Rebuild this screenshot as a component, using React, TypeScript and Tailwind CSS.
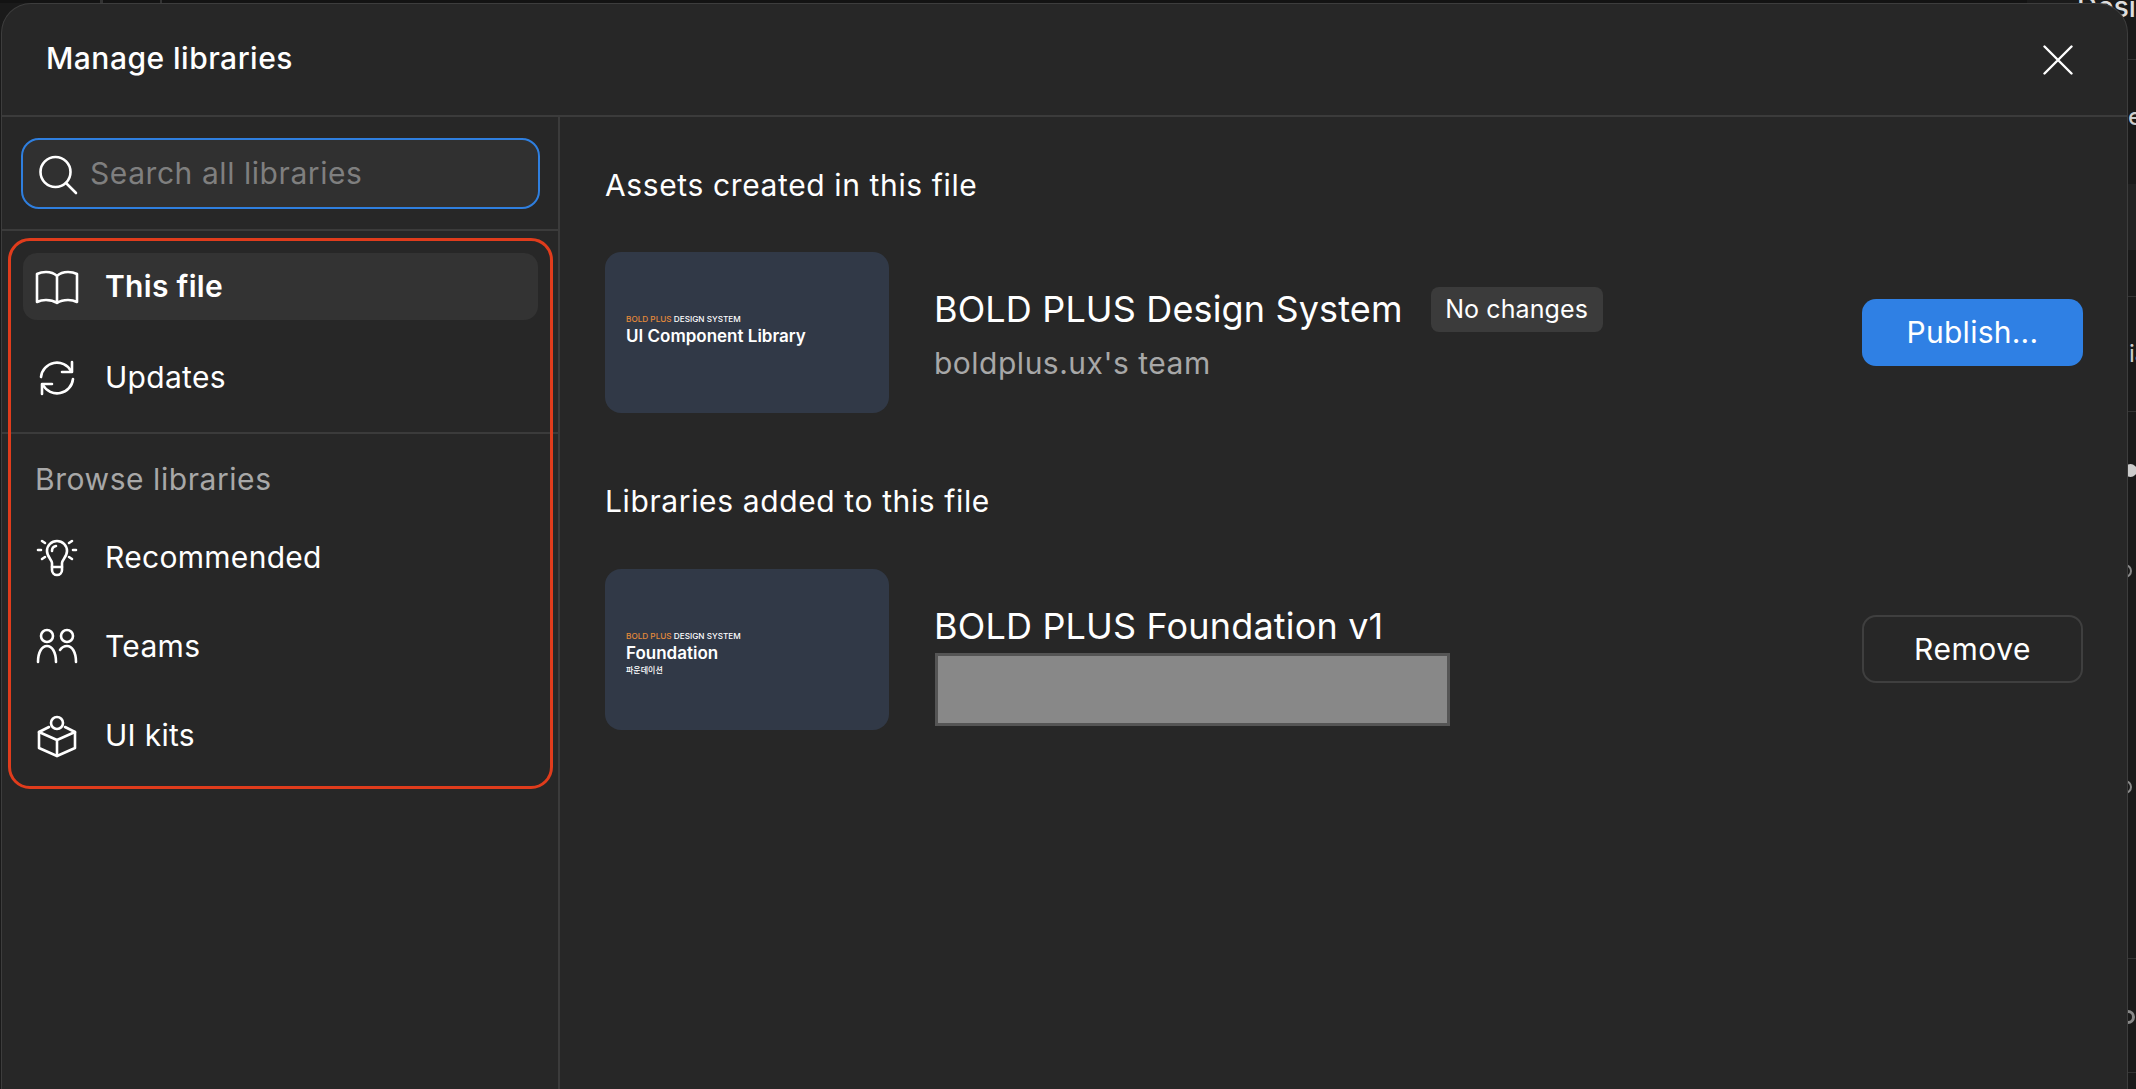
import type { ReactNode } from 'react';

const stroke = {
  fill: 'none',
  stroke: 'currentColor',
  strokeWidth: 2.6,
  strokeLinecap: 'round' as const,
  strokeLinejoin: 'round' as const,
};

function Icon({ children }: { children: ReactNode }) {
  return (
    <svg viewBox="0 0 44 44" className="h-[44px] w-[44px] shrink-0 text-white" {...stroke}>
      {children}
    </svg>
  );
}

const BookIcon = () => (
  <Icon>
    <path d="M22 11C19 8 15 7 11 7C8 7 5 7.500 2 9V37C5 35.500 8 35 11 35C15 35 19 36 22 38C25 36 29 35 33 35C36 35 39 35.500 42 37V9C39 7.500 36 7 33 7C29 7 25 8 22 11V38" />
  </Icon>
);

const RefreshIcon = () => (
  <Icon>
    <path d="M6 21A16 16 0 0 1 36 15" />
    <path d="M37 6V16H27" />
    <path d="M38 23A16 16 0 0 1 8 29" />
    <path d="M7 38V28H17" />
  </Icon>
);

const BulbIcon = () => (
  <Icon>
    <path d="M17 31V27C17 24 12 21 12 15A10 10 0 0 1 32 15C32 21 27 24 27 27V31Z" />
    <path d="M17 31V34A5 5 0 0 0 27 34V31" />
    <path d="M17 15A5 5 0 0 1 21 10" />
    <path d="M7 5L10 7M3 14H6M7 23L10 21M37 5L34 7M41 14H38M37 23L34 21" />
  </Icon>
);

const TeamsIcon = () => (
  <Icon>
    <circle cx="12" cy="11" r="6" />
    <circle cx="32" cy="11" r="6" />
    <path d="M3 37C3 27 7 21 12 21C17 21 21 27 21 37" />
    <path d="M25 25C27 22 29 21 32 21C37 21 41 27 41 37" />
  </Icon>
);

const KitIcon = () => (
  <Icon>
    <circle cx="22" cy="9" r="6" />
    <path d="M14 13L4 18V34L22 42L40 34V18L30 13" />
    <path d="M4 18L22 26L40 18M22 26V42" />
  </Icon>
);

function NavItem({ icon, label, active }: { icon: ReactNode; label: string; active?: boolean }) {
  return (
    <div
      className={`flex h-[67px] w-[515px] items-center gap-[26px] rounded-[14px] pl-[12px] text-[30px] tracking-[0.3px] ${
        active ? 'bg-[#333333] font-semibold' : 'font-normal'
      }`}
    >
      {icon}
      <span>{label}</span>
    </div>
  );
}

function Thumb({ title, sub }: { title: string; sub?: string }) {
  return (
    <div className="h-[161px] w-[284px] shrink-0 rounded-[16px] bg-[#313947] pt-[61px] pl-[21px]">
      <div className="text-[8.200px] leading-[12px] font-medium text-white">
        <span className="text-[#e58a3a]">BOLD PLUS</span> DESIGN SYSTEM
      </div>
      <div className="text-[17px] leading-[23px] font-semibold text-white">{title}</div>
      {sub && <div className="-mt-[1px] text-[8px] leading-[12px] font-medium text-white">{sub}</div>}
    </div>
  );
}

export default function App() {
  return (
    <div className="relative h-[1089px] w-[2136px] overflow-hidden bg-[#1a1a1a] pt-[3px] pr-[8px] pl-[1px] font-['Inter','Noto_Sans_CJK_KR',sans-serif] text-white">
      {/* editor peeking out behind the dialog */}
      <div className="absolute top-0 left-0 h-[3px] w-[2027px] bg-[#131313]" />
      <div className="absolute top-0 left-[100px] h-[3px] w-[3px] bg-[#333333]" />
      <div className="absolute top-0 left-[160px] h-[3px] w-[2px] bg-[#333333]" />
      <div className="absolute top-[59px] left-[2128px] h-[1px] w-[8px] bg-[#333333]" />
      <div className="absolute top-[184px] left-[2128px] h-[66px] w-[8px] bg-[#222222]" />
      <div className="absolute top-[296px] left-[2128px] h-[1px] w-[8px] bg-[#333333]" />
      <div className="absolute top-[411px] left-[2128px] h-[1px] w-[8px] bg-[#333333]" />
      <div className="absolute top-[958px] left-[2128px] h-[1px] w-[8px] bg-[#333333]" />
      <div className="absolute top-[1072px] left-[2128px] h-[1px] w-[8px] bg-[#333333]" />
      <div className="absolute top-0 left-[2077px] text-[28px] leading-[14px] font-medium text-[#dddddd]">Desi</div>
      <div className="absolute top-[113px] left-[2128px] text-[24px] leading-[8px] font-medium text-[#cccccc]">e</div>
      <div className="absolute top-[347px] left-[2129px] text-[24px] leading-[14px] text-[#cccccc]">ia</div>
      <div className="absolute top-[464px] left-[2124px] h-[13px] w-[13px] rounded-full bg-[#cccccc]" />
      <div className="absolute top-[564px] left-[2118px] h-[14px] w-[14px] rounded-full border-[2px] border-[#888888]" />
      <div className="absolute top-[780px] left-[2118px] h-[14px] w-[14px] rounded-full border-[2px] border-[#888888]" />
      <div className="absolute top-[1010px] left-[2121px] h-[14px] w-[14px] rounded-full border-[3px] border-[#888888]" />

      <div className="relative flex h-[1086px] flex-col rounded-t-[30px] border border-b-0 border-[#3d3d3d] bg-[#272727]">
        {/* Header */}
        <div className="flex h-[113px] shrink-0 items-center justify-between border-b-[2px] border-[#3b3b3b] pr-[54px] pl-[44px]">
          <div className="pb-[3px] text-[30px] font-medium tracking-[0.48px]">Manage libraries</div>
          <svg viewBox="0 0 30 30" className="h-[30px] w-[30px]" fill="none" stroke="currentColor" strokeWidth="2.400" strokeLinecap="round">
            <path d="M1.500 1.500L28.500 28.500M28.500 1.500L1.500 28.500" />
          </svg>
        </div>

        <div className="flex min-h-0 flex-1">
          {/* Sidebar */}
          <div className="flex w-[558px] shrink-0 flex-col border-r-[2px] border-[#3b3b3b]">
            <div className="flex h-[114px] shrink-0 items-center border-b-[2px] border-[#3b3b3b] pl-[19px]">
              <div className="flex h-[71px] w-[519px] items-center gap-[15px] rounded-[18px] border-[2px] border-[#2f7fdf] bg-[#303030] pl-[13px]">
                <svg viewBox="0 0 44 44" className="h-[44px] w-[44px] shrink-0" {...stroke}>
                  <circle cx="19.500" cy="21" r="15" />
                  <path d="M30 32L40 42" />
                </svg>
                <span className="-ml-[5px] text-[30px] tracking-[0.56px] text-[#7f7f7f]">Search all libraries</span>
              </div>
            </div>

            <div className="relative flex-1">
              <div className="absolute top-[7px] left-[6px] h-[551px] w-[545px] rounded-[22px] border-[3px] border-[#e03c1c]" />
              <div className="pt-[22px]">
                <div className="flex flex-col gap-[24px] pl-[21px]">
                  <NavItem icon={<BookIcon />} label="This file" active />
                  <NavItem icon={<RefreshIcon />} label="Updates" />
                </div>
                <div className="mt-[21px] border-b-[2px] border-[#3b3b3b]" />
                <div className="mt-[23px] pl-[33px] text-[30px] leading-[44px] tracking-[0.56px] text-[#a8a8a8]">Browse libraries</div>
                <div className="mt-[23px] flex flex-col gap-[22px] pl-[21px]">
                  <NavItem icon={<BulbIcon />} label="Recommended" />
                  <NavItem icon={<TeamsIcon />} label="Teams" />
                  <NavItem icon={<KitIcon />} label="UI kits" />
                </div>
              </div>
            </div>
          </div>

          {/* Content */}
          <div className="min-w-0 flex-1 pt-[50px] pr-[44px] pl-[45px]">
            <div className="text-[30px] leading-[36px] tracking-[0.62px]">Assets created in this file</div>
            <div className="mt-[49px] flex items-start">
              <Thumb title="UI Component Library" />
              <div className="mt-[34px] ml-[45px] flex-1">
                <div className="flex h-[46px] items-center">
                  <span className="text-[36px] tracking-[0.14px]">BOLD PLUS Design System</span>
                  <span className="ml-[28px] flex h-[45px] w-[172px] items-center justify-center rounded-[8px] bg-[#3b3b3b] pt-[1px] text-[25px] tracking-[0.1px]">
                    No changes
                  </span>
                </div>
                <div className="mt-[13px] text-[30px] leading-[36px] tracking-[0.5px] text-[#a8a8a8]">boldplus.ux's team</div>
              </div>
              <button className="mt-[47px] h-[67px] w-[221px] shrink-0 rounded-[14px] bg-[#2f80e4] text-[30px] tracking-[0.25px]">Publish...</button>
            </div>

            <div className="mt-[70px] text-[30px] leading-[36px] tracking-[0.62px]">Libraries added to this file</div>
            <div className="mt-[50px] flex items-start">
              <Thumb title="Foundation" sub="파운데이션" />
              <div className="mt-[37px] ml-[45px] flex-1">
                <div className="text-[36px] leading-[40px] tracking-[0.17px]">BOLD PLUS Foundation v1</div>
                <div className="mt-[7px] ml-[1px] h-[73px] w-[515px] border-[3px] border-[#555555] bg-[#888888]" />
              </div>
              <button className="mt-[46px] h-[68px] w-[221px] shrink-0 rounded-[14px] border-[2px] border-[#3f3f3f] text-[30px] tracking-[0.5px]">Remove</button>
            </div>
          </div>
        </div>
      </div>
    </div>
  );
}
